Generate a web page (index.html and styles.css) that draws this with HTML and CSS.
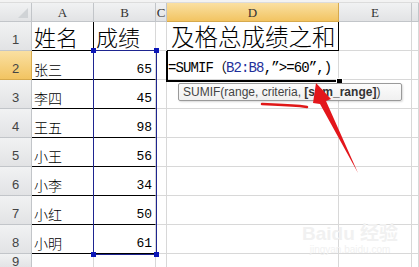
FILE: index.html
```html
<!DOCTYPE html>
<html lang="zh-CN">
<head>
    <meta charset="UTF-8">
    <title>SUMIF</title>
    <link rel="stylesheet" href="styles.css">
</head>
<body>
    <div class="sheet">
        <div class="topbar"></div>
        <div class="grid">
            <!-- 列标题 -->
            <div class="hdr corner"><span class="tri"></span></div>
            <div class="hdr col">A</div>
            <div class="hdr col">B</div>
            <div class="hdr col">C</div>
            <div class="hdr col on">D</div>
            <div class="hdr col">E</div>
            <div class="hdr col"></div>

            <!-- 第1行 -->
            <div class="hdr row">1</div>
            <div class="cell big tb tr">姓名</div>
            <div class="cell big tb">成绩</div>
            <div class="cell"></div>
            <div class="cell big tb tr title">及格总成绩之和</div>
            <div class="cell"></div>
            <div class="cell"></div>

            <!-- 第2行 -->
            <div class="hdr row on">2</div>
            <div class="cell name tb tr">张三</div>
            <div class="cell num tb">65</div>
            <div class="cell"></div>
            <div class="cell formula">=SUMIF（<span class="ref">B2:B8</span>,”&gt;=60”,)</div>
            <div class="cell"></div>
            <div class="cell"></div>

            <div class="hdr row">3</div>
            <div class="cell name tb tr">李四</div>
            <div class="cell num tb">45</div>
            <div class="cell"></div><div class="cell"></div><div class="cell"></div><div class="cell"></div>

            <div class="hdr row">4</div>
            <div class="cell name tb tr">王五</div>
            <div class="cell num tb">98</div>
            <div class="cell"></div><div class="cell"></div><div class="cell"></div><div class="cell"></div>

            <div class="hdr row">5</div>
            <div class="cell name tb tr">小王</div>
            <div class="cell num tb">56</div>
            <div class="cell"></div><div class="cell"></div><div class="cell"></div><div class="cell"></div>

            <div class="hdr row">6</div>
            <div class="cell name tb tr">小李</div>
            <div class="cell num tb">34</div>
            <div class="cell"></div><div class="cell"></div><div class="cell"></div><div class="cell"></div>

            <div class="hdr row">7</div>
            <div class="cell name tb tr">小红</div>
            <div class="cell num tb">50</div>
            <div class="cell"></div><div class="cell"></div><div class="cell"></div><div class="cell"></div>

            <div class="hdr row">8</div>
            <div class="cell name tb tr">小明</div>
            <div class="cell num tb">61</div>
            <div class="cell"></div><div class="cell"></div><div class="cell"></div><div class="cell"></div>

            <div class="hdr row last">9</div>
            <div class="cell"></div><div class="cell"></div><div class="cell"></div>
            <div class="cell"></div><div class="cell"></div><div class="cell"></div>
        </div>

        <!-- 引用区域 B2:B8 -->
        <div class="range">
            <span class="dot d1"></span><span class="dot d2"></span>
            <span class="dot d3"></span><span class="dot d4"></span>
        </div>

        <!-- 活动单元格 -->
        <div class="active"></div>
        <div class="handle"></div>

        <div class="tip">SUMIF(range, criteria, <b>[sum_range]</b>)</div>

        <svg class="marks" width="419" height="267" viewBox="0 0 419 267">
            <path d="M262 104 Q285 105 300 106 L307 107" stroke="#e01818" stroke-width="2.5" fill="none" stroke-linecap="round"/>
            <polygon points="316,83 331,99 326,101 358,173 320,104 313,103" fill="#e3161b"/>
        </svg>

        <div class="mark">
            <div class="mark-logo">Bai<span>du</span> 经验</div>
            <div class="mark-url">jingyan.baidu.com</div>
        </div>
    </div>
</body>
</html>
```

FILE: styles.css
```css
body {
    margin: 0;
    background: #fff;
    font-family: "Noto Sans CJK SC", sans-serif;
}

.sheet {
    position: relative;
    width: 419px;
    height: 267px;
    overflow: hidden;
}

.topbar {
    height: 3px;
    background: #f3f3f3;
    border-bottom: 1px solid #dcdcdc;
    box-sizing: border-box;
}

.grid {
    display: grid;
    grid-template-columns: 32px 62px 62px 11px 172px 73px 1fr;
    grid-template-rows: 19px repeat(8, 29px) 1fr;
    height: 264px;
}

.grid > div {
    box-sizing: border-box;
    border-right: 1px solid #d8d8d8;
    border-bottom: 1px solid #d8d8d8;
}

/* 标题栏 */
.hdr {
    background: linear-gradient(#f1f2f3, #e2e3e5);
    color: #333;
    display: flex;
    align-items: center;
    justify-content: center;
}

.grid > .hdr {
    border-right-color: #c2c5c9;
    border-bottom-color: #c2c5c9;
}

.col {
    font-family: "Liberation Serif", serif;
    font-size: 13px;
    padding-top: 1px;
}

.row {
    font-family: "Liberation Sans", sans-serif;
    font-size: 13px;
    align-items: flex-end;
    padding-bottom: 3px;
    color: #444;
}

.row.last {
    align-items: flex-start;
    padding: 1px 0 0;
    line-height: 13px;
}

.hdr.on {
    background: linear-gradient(#fae0a2, #f2c462);
}

.grid > .hdr.on {
    border-right-color: #d6a94c;
    border-bottom-color: #d6a94c;
}

.corner {
    position: relative;
}

.tri {
    position: absolute;
    right: 3px;
    bottom: 3px;
    border-left: 10px solid transparent;
    border-bottom: 10px solid #d0d3d6;
}

/* 单元格 */
.cell {
    display: flex;
    align-items: flex-end;
    padding: 0 2px 1px;
    color: #000;
    white-space: nowrap;
}

.grid > .tb {
    border-bottom-color: #000;
}

.grid > .tr {
    border-right-color: #000;
}

.big {
    font-size: 22px;
    line-height: 25px;
    font-weight: 300;
}

.title {
    font-size: 23.5px;
    padding-left: 4px;
}

.name {
    font-size: 14px;
    line-height: 17px;
    font-weight: 300;
}

.num {
    justify-content: flex-end;
    font-family: "Liberation Mono", monospace;
    font-size: 13px;
    line-height: 15px;
    padding-right: 3px;
    padding-bottom: 2px;
}

.formula {
    font-family: "Liberation Mono", "Noto Sans CJK SC", monospace;
    font-size: 14px;
    letter-spacing: -0.9px;
    line-height: 16px;
    padding-bottom: 3px;
    padding-left: 1px;
}

.ref {
    color: #1f2f9a;
}

/* 覆盖层 */
.range {
    position: absolute;
    left: 93px;
    top: 50px;
    width: 64px;
    height: 205px;
    box-sizing: border-box;
    border: 1px solid #1e2590;
}

.dot {
    position: absolute;
    width: 5px;
    height: 5px;
    background: #0b16b8;
}

.d1 { left: -3px; top: -3px; }
.d2 { right: -3px; top: -3px; }
.d3 { left: -3px; bottom: -3px; }
.d4 { right: -3px; bottom: -3px; }

.active {
    position: absolute;
    left: 166px;
    top: 51px;
    width: 172px;
    height: 31px;
    box-sizing: border-box;
    border-left: 2px solid #000;
    border-bottom: 2px solid #000;
}

.handle {
    position: absolute;
    left: 336px;
    top: 78px;
    width: 5px;
    height: 5px;
    background: #000;
    border: 1px solid #fff;
}

.tip {
    position: absolute;
    left: 178px;
    top: 83px;
    width: 224px;
    height: 18px;
    box-sizing: border-box;
    padding: 0 0 0 4px;
    background: linear-gradient(#fcfcfc, #f0f0f0);
    border: 1px solid #9a9a9a;
    border-radius: 2px;
    box-shadow: 1px 1px 2px rgba(0, 0, 0, 0.15);
    font-family: "Liberation Sans", sans-serif;
    font-size: 12px;
    line-height: 16px;
    color: #444;
    white-space: nowrap;
}

.tip b {
    color: #333;
}

.marks {
    position: absolute;
    left: 0;
    top: 0;
}

.mark {
    position: absolute;
    left: 302px;
    top: 224px;
    color: #f1f1f1;
    text-align: center;
}

.mark-logo {
    font-family: "Liberation Sans", "Noto Sans CJK SC", sans-serif;
    font-size: 19px;
    font-weight: bold;
    line-height: 20px;
}

.mark-url {
    font-family: "Liberation Sans", sans-serif;
    font-size: 10px;
    line-height: 12px;
}
```
